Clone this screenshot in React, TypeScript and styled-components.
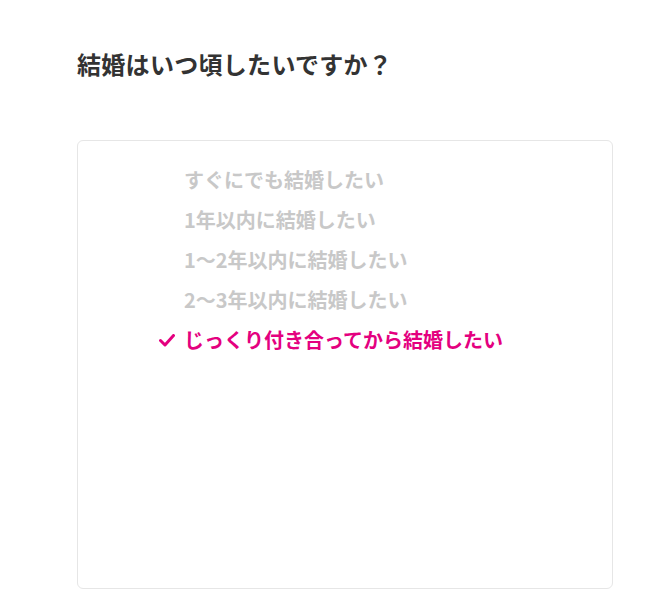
import styled, { createGlobalStyle } from "styled-components";

const GlobalStyle = createGlobalStyle`
  html, body {
    margin: 0;
    padding: 0;
    background: #fff;
  }
  body {
    font-family: "Noto Sans CJK JP", "Noto Sans", sans-serif;
  }
`;

const options = [
  "すぐにでも結婚したい",
  "1年以内に結婚したい",
  "1〜2年以内に結婚したい",
  "2〜3年以内に結婚したい",
  "じっくり付き合ってから結婚したい",
];

const selected = 4;

const App = () => {
  return (
    <>
      <GlobalStyle />
      <Page>
        <Title>結婚はいつ頃したいですか？</Title>
        <Card>
          <OptionList>
            {options.map((label, i) => (
              <OptionItem key={label} $active={i === selected}>
                <CheckMark>
                  {i === selected ? (
                    <svg width="16" height="13" viewBox="0 0 16 13" fill="none">
                      <path
                        d="M1.5 6.5 L6 11 L14.5 1.5"
                        stroke="#e4007f"
                        strokeWidth="3"
                        strokeLinecap="round"
                        strokeLinejoin="round"
                      />
                    </svg>
                  ) : null}
                </CheckMark>
                {label}
              </OptionItem>
            ))}
          </OptionList>
        </Card>
      </Page>
    </>
  );
};

const Page = styled.div`
  display: flex;
  flex-flow: column nowrap;
  padding: 46px 41px 22px 77px;
`;

const Title = styled.h2`
  margin: 0 0 58px;
  font-size: 24px;
  line-height: 36px;
  font-weight: 700;
  letter-spacing: 0.3px;
  color: #333;
`;

const Card = styled.div`
  height: 449px;
  box-sizing: border-box;
  border: 1px solid #e6e6e6;
  border-radius: 6px;
  padding: 18px 0 0 81px;
`;

const OptionList = styled.ul`
  list-style: none;
  margin: 0;
  padding: 0;
  display: flex;
  flex-flow: column nowrap;
`;

const OptionItem = styled.li<{ $active: boolean }>`
  display: flex;
  align-items: center;
  height: 40px;
  font-size: 20px;
  font-weight: 700;
  color: ${({ $active }) => ($active ? "#e4007f" : "#c8c8c8")};
`;

const CheckMark = styled.span`
  display: flex;
  align-items: center;
  width: 16px;
  margin-right: 9px;
  padding-top: 3px;
`;

export default App;
